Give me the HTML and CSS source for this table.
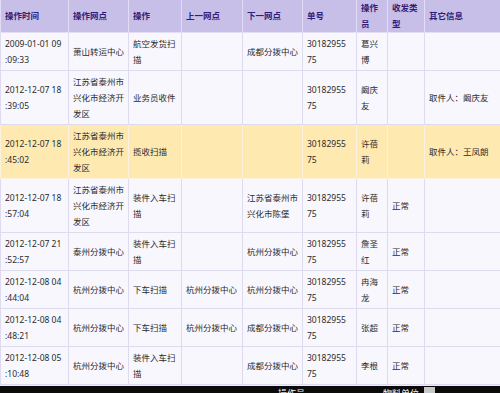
FILE: index.html
```html
<!DOCTYPE html>
<html>
<head>
<meta charset="utf-8">
<link rel="stylesheet" href="styles.css">
</head>
<body>
<div class="page">
<table class="track">
<colgroup>
<col class="c1"><col class="c2"><col class="c3"><col class="c4"><col class="c5"><col class="c6"><col class="c7"><col class="c8"><col class="c9">
</colgroup>
<thead>
<tr>
<th>操作时间</th><th>操作网点</th><th>操作</th><th>上一网点</th><th>下一网点</th><th>单号</th><th>操作<br>员</th><th>收发类<br>型</th><th>其它信息</th>
</tr>
</thead>
<tbody>
<tr>
<td>2009-01-01 09<br>:09:33</td><td>萧山转运中心</td><td>航空发货扫<br>描</td><td></td><td>成都分拨中心</td><td>30182955<br>75</td><td>葛兴<br>博</td><td></td><td></td>
</tr>
<tr>
<td>2012-12-07 18<br>:39:05</td><td>江苏省泰州市<br>兴化市经济开<br>发区</td><td>业务员收件</td><td></td><td></td><td>30182955<br>75</td><td>阚庆<br>友</td><td></td><td>取件人：阚庆友</td>
</tr>
<tr class="hl">
<td>2012-12-07 18<br>:45:02</td><td>江苏省泰州市<br>兴化市经济开<br>发区</td><td>揽收扫描</td><td></td><td></td><td>30182955<br>75</td><td>许蓓<br>莉</td><td></td><td>取件人：王凤朗</td>
</tr>
<tr>
<td>2012-12-07 18<br>:57:04</td><td>江苏省泰州市<br>兴化市经济开<br>发区</td><td>装件入车扫<br>描</td><td></td><td>江苏省泰州市<br>兴化市陈堡</td><td>30182955<br>75</td><td>许蓓<br>莉</td><td>正常</td><td></td>
</tr>
<tr>
<td>2012-12-07 21<br>:52:57</td><td>泰州分拨中心</td><td>装件入车扫<br>描</td><td></td><td>杭州分拨中心</td><td>30182955<br>75</td><td>詹圣<br>红</td><td>正常</td><td></td>
</tr>
<tr>
<td>2012-12-08 04<br>:44:04</td><td>杭州分拨中心</td><td>下车扫描</td><td>杭州分拨中心</td><td>杭州分拨中心</td><td>30182955<br>75</td><td>冉海<br>龙</td><td>正常</td><td></td>
</tr>
<tr>
<td>2012-12-08 04<br>:48:21</td><td>杭州分拨中心</td><td>下车扫描</td><td>杭州分拨中心</td><td>成都分拨中心</td><td>30182955<br>75</td><td>张超</td><td>正常</td><td></td>
</tr>
<tr>
<td>2012-12-08 05<br>:10:48</td><td>杭州分拨中心</td><td>装件入车扫<br>描</td><td></td><td>成都分拨中心</td><td>30182955<br>75</td><td>李根</td><td>正常</td><td></td>
</tr>
</tbody>
</table>
<div class="gap"></div>
<div class="footbar">
<span class="ft ft1">操作员</span><span class="ft ft2">物料单位</span><span class="drop"></span>
</div>
</div>
</body>
</html>
```
FILE: styles.css
```css
html, body {
  margin: 0;
  padding: 0;
  background: #ffffff;
  overflow: hidden;
}
.page {
  width: 500px;
  height: 393px;
  overflow: hidden;
  font-family: "Noto Sans", "Noto Sans CJK SC", sans-serif;
  font-size: 8.5px;
  color: #2b2b2b;
}
.track {
  border-collapse: collapse;
  table-layout: fixed;
  width: 502px;
}
.c1 { width: 68px; }
.c2 { width: 60px; }
.c3 { width: 53px; }
.c4 { width: 61px; }
.c5 { width: 60px; }
.c6 { width: 54px; }
.c7 { width: 31px; }
.c8 { width: 37px; }
.c9 { width: 78px; }
.track th {
  background: #c8bfe9;
  color: #301d78;
  font-weight: bold;
  text-align: left;
  line-height: 16px;
  height: 31px;
  padding: 0 4px;
  border: 1px solid #e2dcf4;
  border-top: 0;
  vertical-align: middle;
  white-space: nowrap;
}
.track td {
  background: #f8f7fd;
  line-height: 16px;
  padding: 3px 1px 2px 4px;
  border: 1px solid #dedbef;
  vertical-align: middle;
  white-space: nowrap;
  overflow: hidden;
}
.track tr.hl td {
  background: #fee9b1;
  border-color: #fbf1de;
}
.gap {
  height: 1px;
  background: #eeeeee;
}
.footbar {
  position: relative;
  height: 10px;
  background: #0b0b0b;
  overflow: hidden;
}
.ft {
  position: absolute;
  top: 2px;
  color: #ffffff;
  font-size: 9px;
  line-height: 12px;
}
.ft1 { left: 278px; }
.ft2 { left: 383px; }
.drop {
  position: absolute;
  top: 1px;
  left: 424px;
  width: 11px;
  height: 10px;
  background: #c8c8c8;
}
```
